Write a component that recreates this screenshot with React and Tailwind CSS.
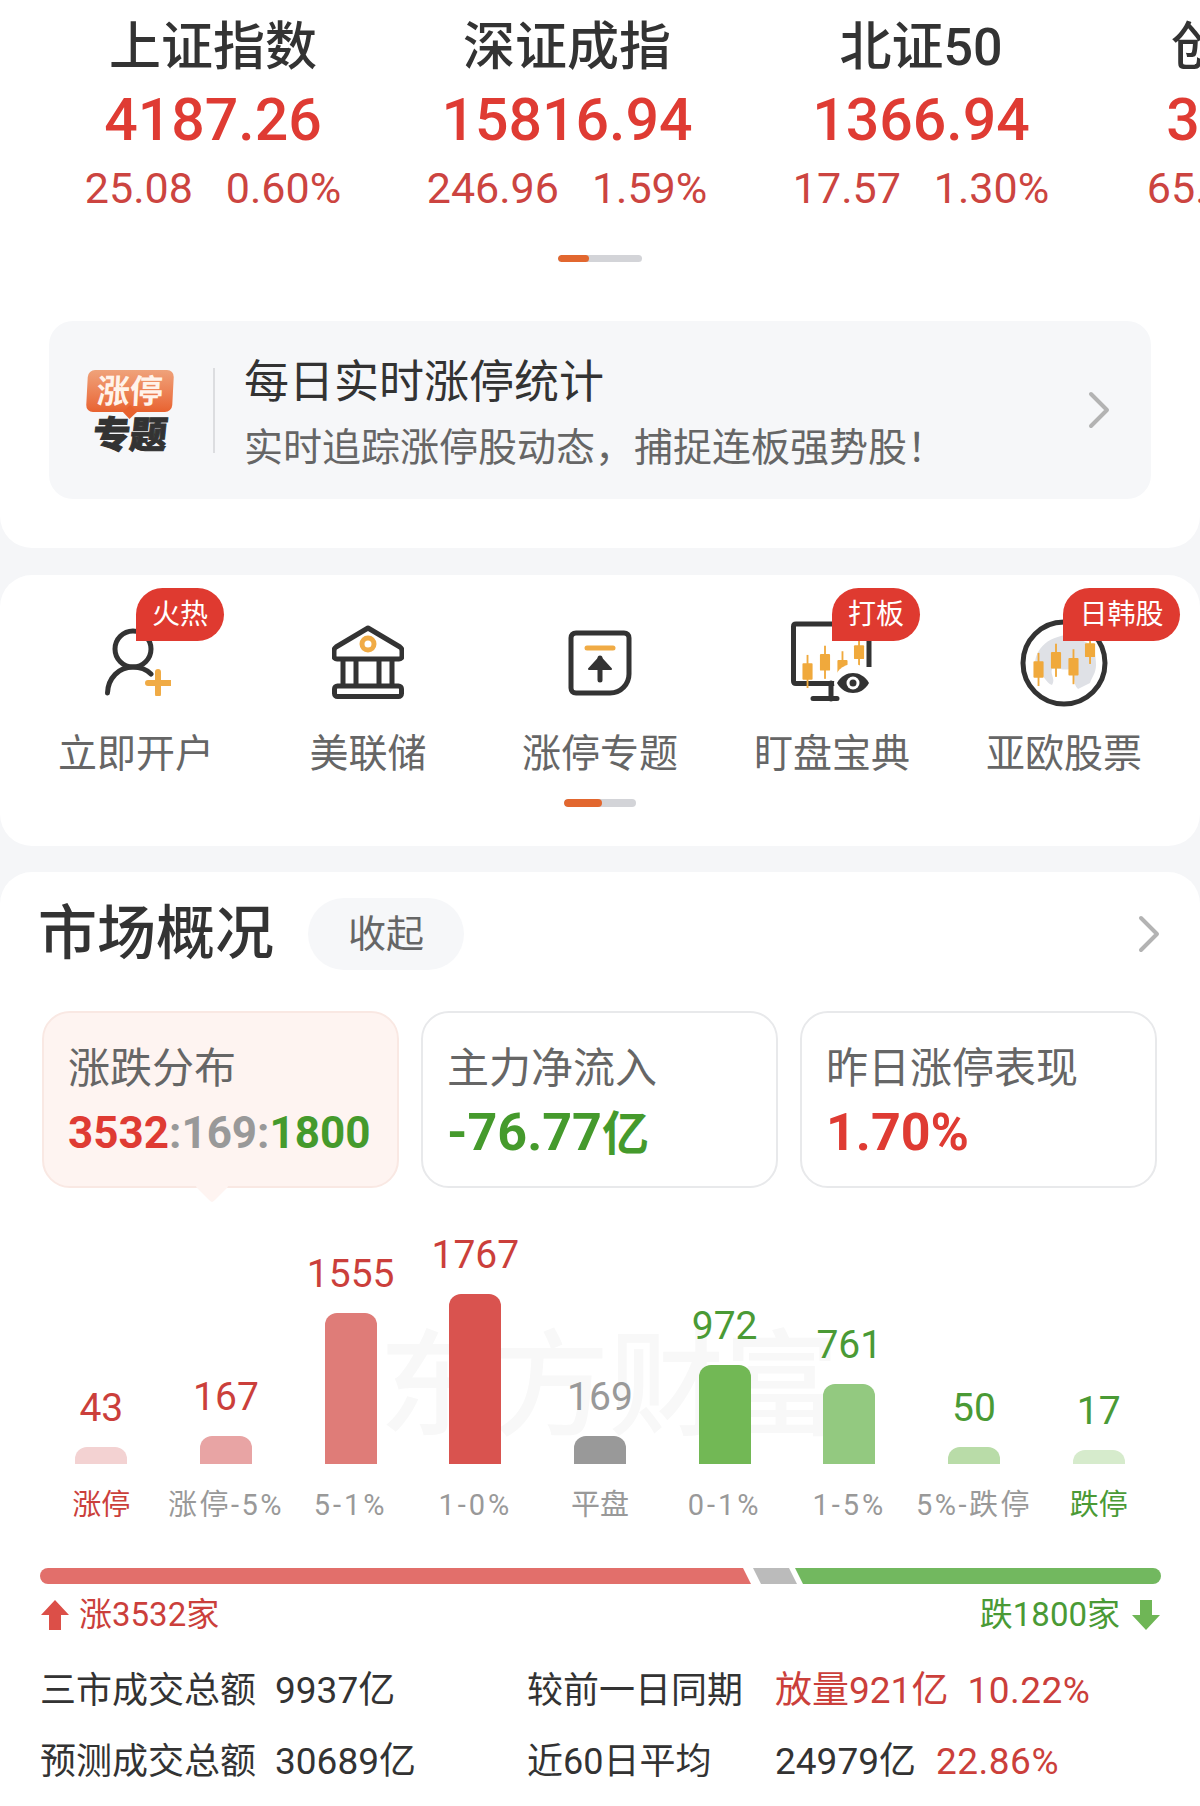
import React from "react";

const indices = [
  { n: "上证指数", v: "4187.26", a: "25.08", b: "0.60%" },
  { n: "深证成指", v: "15816.94", a: "246.96", b: "1.59%" },
  { n: "北证50", v: "1366.94", a: "17.57", b: "1.30%" },
  { n: "创业板指", v: "3946.26", a: "65.32", b: "1.68%" },
];

const bars = [
  { v: "43", l: "涨停", h: "h-[17px]", b: "bg-[#f3d2d2]", t: "text-[#cb3f3b]", c: "text-[#cb3f3b]", k: "" },
  { v: "167", l: "涨停-5%", h: "h-[28px]", b: "bg-[#e8a4a4]", t: "text-[#cb3f3b]", c: "text-[#999999]", k: "tracking-[2.500px]" },
  { v: "1555", l: "5-1%", h: "h-[151px]", b: "bg-[#df7c78]", t: "text-[#cb3f3b]", c: "text-[#999999]", k: "tracking-[3px]" },
  { v: "1767", l: "1-0%", h: "h-[170px]", b: "bg-[#d9534f]", t: "text-[#cb3f3b]", c: "text-[#999999]", k: "tracking-[3px]" },
  { v: "169", l: "平盘", h: "h-[28px]", b: "bg-[#999999]", t: "text-[#999999]", c: "text-[#999999]", k: "" },
  { v: "972", l: "0-1%", h: "h-[99px]", b: "bg-[#72b855]", t: "text-[#4a9a35]", c: "text-[#999999]", k: "tracking-[3px]" },
  { v: "761", l: "1-5%", h: "h-[80px]", b: "bg-[#93c980]", t: "text-[#4a9a35]", c: "text-[#999999]", k: "tracking-[3px]" },
  { v: "50", l: "5%-跌停", h: "h-[17px]", b: "bg-[#b9dca8]", t: "text-[#4a9a35]", c: "text-[#999999]", k: "tracking-[2.500px]" },
  { v: "17", l: "跌停", h: "h-[14px]", b: "bg-[#d6ebcc]", t: "text-[#4a9a35]", c: "text-[#4a9a35]", k: "" },
];

function Candles({ x = 0, y = 0, scale = 1 }) {
  const items = [
    [6, 26, 36, 11],
    [25, 16, 36, 11],
    [44, 22, 38, 11],
    [62, 8, 30, 11],
  ];
  return (
    <g transform={`translate(${x} ${y}) scale(${scale})`} fill="#f0a93c">
      {items.map(([cx, top, len, w], i) => (
        <g key={i}>
          <rect x={cx - 1} y={top} width="2" height={len} />
          <rect x={cx - w / 2} y={top + len * 0.25} width={w} height={len * 0.5} rx="1" />
        </g>
      ))}
    </g>
  );
}

function UserIcon() {
  return (
    <svg width="66" height="68" viewBox="0 0 66 68" fill="none">
      <circle cx="28" cy="21" r="18" stroke="#333" strokeWidth="5" />
      <path d="M2.500 65C3 50 14 39 28 39c7 0 13 2 18 7" stroke="#333" strokeWidth="5" strokeLinecap="round" />
      <path d="M53 44v22M43 55h22" stroke="#f0ab45" strokeWidth="6" strokeLinecap="round" />
    </svg>
  );
}

function BankIcon() {
  return (
    <svg width="72" height="74" viewBox="0 0 72 74" fill="none">
      <path d="M36 3 68 22c1.500 1 2 2 2 4v5c0 1.500-1 3-3 3H5c-2 0-3-1.500-3-3v-5c0-2 .5-3 2-4L36 3Z" stroke="#333" strokeWidth="5" strokeLinejoin="round" />
      <circle cx="36" cy="19" r="6" stroke="#f0ab45" strokeWidth="5" />
      <path d="M11 34v28M24 34v28M47 34v28M60 34v28" stroke="#333" strokeWidth="5" />
      <rect x="2.500" y="61" width="67" height="10.500" rx="3" stroke="#333" strokeWidth="5" />
    </svg>
  );
}

function TopicIcon() {
  return (
    <svg width="64" height="66" viewBox="0 0 64 66" fill="none">
      <path d="M8 3h48c3 0 5 2 5 5v36c0 10-8 19-19 19H8c-3 0-5-2-5-5V8c0-3 2-5 5-5Z" stroke="#333" strokeWidth="5" strokeLinejoin="round" />
      <path d="M19 18h26" stroke="#f0ab45" strokeWidth="5" strokeLinecap="round" />
      <path d="M32 50V28" stroke="#333" strokeWidth="5" strokeLinecap="round" />
      <path d="M21 39 32 27l11 12Z" fill="#333" stroke="#333" strokeWidth="2" strokeLinejoin="round" />
    </svg>
  );
}

function MonitorIcon() {
  return (
    <svg className="-mb-[2px]" width="82" height="82" viewBox="0 0 82 82" fill="none">
      <path d="M78 10V3H5C3.500 3 2.500 4 2.500 5.500V60C2.500 61.500 3.500 62.500 5 62.500H44" stroke="#333" strokeWidth="5" />
      <path d="M78 10v36" stroke="#333" strokeWidth="5" />
      <path d="M40 62v16M22 77.500h24" stroke="#333" strokeWidth="5" strokeLinecap="round" />
      <Candles x={11} y={10} scale={0.92} />
      <circle cx="62" cy="62" r="19" fill="#fff" />
      <path d="M46 62c4-7 10-10 16-10s12 3 16 10c-4 7-10 10-16 10s-12-3-16-10Z" fill="#333" />
      <circle cx="62" cy="62" r="6.500" fill="#fff" />
      <circle cx="62" cy="62" r="3.500" fill="#333" />
    </svg>
  );
}

function GlobeIcon() {
  return (
    <svg className="-mb-[6px]" width="88" height="88" viewBox="0 0 88 88" fill="none">
      <path d="M20 30c6-8 14-12 26-14 8 0 12 4 22 8 6 4 8 12 8 22 0 8-4 12-6 18l-12 6c-6-6-2-14-8-20-8 2-12-2-18 0-2 6 4 10 0 16-6-2-10-12-16-18-2-6 0-12 4-18Z" fill="#dfe1e6" />
      <circle cx="44" cy="44" r="41" stroke="#333" strokeWidth="5" />
      <Candles x={13} y={10} scale={0.92} />
    </svg>
  );
}

function Chevron({ className }) {
  return (
    <svg className={className} width="24" height="40" viewBox="0 0 24 40" fill="none">
      <path d="M4 4 20 20 4 36" stroke="#b3b3b3" strokeWidth="4" strokeLinecap="round" strokeLinejoin="round" />
    </svg>
  );
}

function Badge({ text, className }) {
  return (
    <span className={`absolute top-[13px] h-[53px] rounded-t-[27px] rounded-br-[27px] bg-[#df3a30] text-center text-[28px] leading-[53px] text-white ${className}`}>
      {text}
    </span>
  );
}

function Shortcut({ label, icon, badge, iconClass }) {
  return (
    <div className="relative flex h-full w-[232px] flex-col items-center">
      <div className={`mt-[36px] flex h-[90px] items-end justify-center ${iconClass}`}>{icon}</div>
      <div className="mt-[28px] whitespace-nowrap text-[39px] leading-[50px] text-[#666666]">{label}</div>
      {badge}
    </div>
  );
}

export default function App() {
  return (
    <div className="h-[1806px] w-[1200px] overflow-hidden bg-[#f5f6f8] font-['Roboto','Noto_Sans_CJK_SC',sans-serif]">
      {/* top card */}
      <section className="h-[548px] overflow-hidden rounded-b-[32px] bg-white">
        <div className="flex overflow-hidden pl-[36px] pt-[18px]">
          {indices.map((it) => (
            <div key={it.n} className="flex w-[354px] shrink-0 flex-col items-center whitespace-nowrap">
              <div className="h-[60px] text-[52px] font-medium leading-[60px] text-[#333333]">{it.n}</div>
              <div className="mt-[10px] h-[64px] text-[59px] font-medium leading-[64px] text-[#df3b33]">{it.v}</div>
              <div className="mt-[10px] flex h-[52px] gap-[33px] text-[43px] font-normal leading-[52px] text-[#cc4440]">
                <span>{it.a}</span>
                <span>{it.b}</span>
              </div>
            </div>
          ))}
        </div>
        <div className="mx-auto mt-[41px] flex h-[7px] w-[84px] overflow-hidden rounded-full bg-[#d3d4d8]">
          <div className="h-full w-[31px] rounded-full bg-[#e2672f]" />
        </div>
        <div className="mx-[49px] mt-[59px] flex h-[178px] items-center rounded-[24px] bg-[#f6f7f9]">
          <div className="ml-[38px] mt-[4px] flex w-[86px] flex-col items-center">
            <div className="relative flex h-[42px] w-[86px] -skew-x-3 items-center justify-center rounded-[7px] bg-gradient-to-b from-[#efa27a] to-[#e8622f] text-[33px] font-bold leading-none text-[#fff3ea]">
              涨停
              <span className="absolute -bottom-[5px] left-[39px] h-[10px] w-[10px] rotate-45 bg-[#e8622f]" />
            </div>
            <div className="mt-[5px] -skew-x-6 text-[37px] font-black leading-[38px] text-[#333333] [-webkit-text-stroke:1px_#333333]">专题</div>
          </div>
          <div className="ml-[40px] h-[85px] w-[2px] bg-[#dcdde0]" />
          <div className="ml-[29px] mt-[8px] flex flex-col">
            <div className="text-[45px] leading-[54px] text-[#333333]">每日实时涨停统计</div>
            <div className="mt-[13px] whitespace-nowrap text-[39px] leading-[50px] text-[#666666]">实时追踪涨停股动态，捕捉连板强势股！</div>
          </div>
          <Chevron className="ml-auto mr-[40px]" />
        </div>
      </section>

      {/* shortcuts */}
      <section className="mt-[27px] h-[271px] rounded-[32px] bg-white">
        <div className="flex h-[225px] pl-[20px]">
          <Shortcut label="立即开户" icon={<UserIcon />} iconClass="pl-[3px] pb-[5px]" badge={<Badge text="火热" className="left-[116px] w-[88px]" />} />
          <Shortcut label="美联储" icon={<BankIcon />} iconClass="pb-[2px]" />
          <Shortcut label="涨停专题" icon={<TopicIcon />} iconClass="pb-[5px]" />
          <Shortcut label="盯盘宝典" icon={<MonitorIcon />} iconClass="" badge={<Badge text="打板" className="left-[116px] w-[88px]" />} />
          <Shortcut label="亚欧股票" icon={<GlobeIcon />} iconClass="" badge={<Badge text="日韩股" className="left-[115px] w-[117px]" />} />
        </div>
        <div className="mx-auto mt-[-1px] flex h-[8px] w-[72px] overflow-hidden rounded-full bg-[#d3d4d8]">
          <div className="h-full w-[38px] rounded-full bg-[#e2672f]" />
        </div>
      </section>

      {/* market */}
      <section className="relative mt-[26px] h-[934px] rounded-t-[32px] bg-white px-[40px] pt-[26px]">
        <div className="flex h-[72px] items-center">
          <h2 className="-ml-[2px] text-[59px] font-medium leading-[72px] text-[#333333]">市场概况</h2>
          <div className="ml-[34px] flex h-[72px] w-[156px] items-center justify-center rounded-full bg-[#f6f7f9] text-[38px] text-[#666666]">收起</div>
          <Chevron className="ml-auto mr-[-1px]" />
        </div>

        <div className="mt-[41px] ml-[2px] flex gap-[22px]">
          <div className="relative h-[177px] w-[357px] rounded-[28px] border-2 border-[#f9e8e3] bg-[#fef4f1] pl-[24px]">
            <div className="mt-[31px] text-[42px] leading-[50px] text-[#666666]">涨跌分布</div>
            <div className="mt-[14px] whitespace-nowrap text-[44px] font-bold leading-[50px]">
              <span className="text-[#df3b33]">3532</span>
              <span className="text-[#999999]">:169:</span>
              <span className="text-[#459a2c]">1800</span>
            </div>
            <span className="absolute -bottom-[12px] left-[156px] h-[24px] w-[24px] rotate-45 rounded-[3px] bg-[#fef4f1]" />
          </div>
          <div className="h-[177px] w-[357px] rounded-[28px] border-2 border-[#e8e9eb] bg-white pl-[24px]">
            <div className="mt-[31px] text-[42px] leading-[50px] text-[#666666]">主力净流入</div>
            <div className="mt-[14px] whitespace-nowrap text-[52px] font-bold leading-[50px] text-[#459a2c]">-76.77<span className="text-[47px]">亿</span></div>
          </div>
          <div className="h-[177px] w-[357px] rounded-[28px] border-2 border-[#e8e9eb] bg-white pl-[24px]">
            <div className="mt-[31px] text-[42px] leading-[50px] text-[#666666]">昨日涨停表现</div>
            <div className="mt-[14px] whitespace-nowrap text-[52px] font-bold leading-[50px] text-[#df3b33]">1.70%</div>
          </div>
        </div>

        <div className="relative mt-[17px] -ml-[1px] h-[259px] w-[1122px]">
          <div className="absolute left-[340px] top-[117px] whitespace-nowrap text-[115px] font-medium leading-[130px] text-[#f8f8f8]">东方财富</div>
          <div className="relative grid h-full grid-cols-9 items-end">
            {bars.map((b) => (
              <div key={b.l} className="flex flex-col items-center">
                <div className={`mb-[19px] text-[39px] font-normal leading-[40px] ${b.t}`}>{b.v}</div>
                <div className={`w-[52px] rounded-t-[12px] ${b.h} ${b.b}`} />
              </div>
            ))}
          </div>
        </div>
        <div className="mt-[21px] -ml-[1px] grid h-[40px] w-[1122px] grid-cols-9">
          {bars.map((b) => (
            <div key={b.l} className={`whitespace-nowrap text-center text-[29px] font-normal leading-[40px] ${b.c} ${b.k}`}>{b.l}</div>
          ))}
        </div>

        <div className="mt-[43px] flex h-[16px] w-[1121px]">
          <div className="h-full w-[711px] rounded-l-full bg-[#e26f6b] [clip-path:polygon(0_0,703px_0,711px_100%,0_100%)]" />
          <div className="ml-[2px] h-full w-[44px] bg-[#bbbbbb] [clip-path:polygon(0_0,36px_0,44px_100%,8px_100%)]" />
          <div className="ml-[-2px] h-full flex-1 rounded-r-full bg-[#72b85f] [clip-path:polygon(0_0,100%_0,100%_100%,8px_100%)]" />
        </div>

        <div className="mt-[11px] flex h-[40px] w-[1121px] items-center justify-between text-[33px] font-normal">
          <div className="flex items-center whitespace-nowrap text-[#cb3f3b]">
            <svg width="30" height="32" viewBox="0 0 30 32" className="mr-[9px]"><path d="M15 1 29 16H21V31H9V16H1Z" fill="#dc4f48" /></svg>
            涨3532家
          </div>
          <div className="flex items-center whitespace-nowrap text-[#4a9a35]">
            跌1800家
            <svg width="30" height="32" viewBox="0 0 30 32" className="ml-[11px]"><path d="M15 31 29 16H21V1H9V16H1Z" fill="#6fb656" /></svg>
          </div>
        </div>

        <div className="mt-[31px] flex h-[50px] items-center whitespace-nowrap text-[36px] font-normal leading-[50px] text-[#333333]">
          <span className="w-[235px]">三市成交总额</span>
          <span className="w-[252px] text-[37px]">9937亿</span>
          <span className="w-[248px]">较前一日同期</span>
          <span className="text-[37px] text-[#cb3f3b]">放量921亿</span>
          <span className="ml-[19px] text-[37px] tracking-[0.500px] text-[#cb3f3b]">10.22%</span>
        </div>
        <div className="mt-[21px] flex h-[50px] items-center whitespace-nowrap text-[36px] font-normal leading-[50px] text-[#333333]">
          <span className="w-[235px]">预测成交总额</span>
          <span className="w-[252px] text-[37px]">30689亿</span>
          <span className="w-[248px]">近60日平均</span>
          <span className="text-[37px]">24979亿</span>
          <span className="ml-[20px] text-[37px] tracking-[0.500px] text-[#cb3f3b]">22.86%</span>
        </div>
      </section>
    </div>
  );
}
